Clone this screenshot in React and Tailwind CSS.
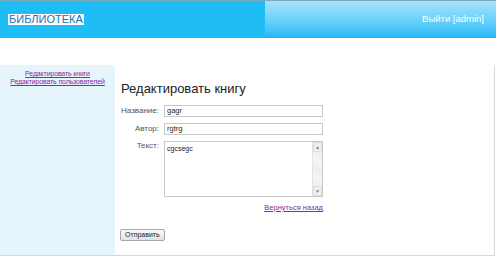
import React from 'react'

const FIELDS = [
  { label: 'Название:', value: 'gagr' },
  { label: 'Автор:', value: 'rgtrg' },
]

function ScrollBar() {
  return (
    <div className="flex w-[10px] flex-col border-l border-[#e4e4e4] bg-[#f4f4f4]">
      <div className="flex h-[10px] items-center justify-center border border-[#dcdcdc] bg-[#f0f0f0] text-[5px] leading-none text-[#888]">
        ▲
      </div>
      <div className="flex-1 bg-[repeating-linear-gradient(45deg,#ececec_0,#ececec_1px,#f8f8f8_1px,#f8f8f8_2px)]" />
      <div className="flex h-[10px] items-center justify-center border border-[#dcdcdc] bg-[#f0f0f0] text-[5px] leading-none text-[#888]">
        ▼
      </div>
    </div>
  )
}

export default function App() {
  return (
    <div className="relative h-[258px] w-[496px] overflow-hidden bg-white font-['Liberation_Sans',Arial,sans-serif]">
      <header className="flex h-[38px] border-t border-[#7da6bf]">
        <div className="w-[265px] bg-[#1ebdf6] pl-[8px] pt-[5px]">
          <span className="inline-block bg-white px-[1px] text-[11px] leading-[11px] text-[#1a6fb8]">
            БИБЛИОТЕКА
          </span>
        </div>
        <div className="flex flex-1 justify-end bg-gradient-to-b from-[#a4e2fc] via-[#6ad2fa] to-[#1bb8f5] pr-[12px] pt-[12px]">
          <span className="text-[9.5px] leading-[12px] text-white">Выйти [admin]</span>
        </div>
      </header>

      <div className="h-[27px]" />

      <div className="flex h-[191px] w-[495px] border-r border-b border-[#d3dadd]">
        <aside className="w-[115px] bg-[#e6f5fb] bg-[radial-gradient(#d6edf7_0.6px,transparent_0.6px)] bg-[length:2px_2px] pt-[5px] text-center text-[7px] leading-[8px] tracking-[-0.15px]">
          <a className="block text-[#8a2a9e] underline" href="#">Редактировать книги</a>
          <a className="block text-[#8a2a9e] underline" href="#">Редактировать пользователей</a>
        </aside>

        <main className="pl-[6px]">
          <h1 className="mt-[15px] text-[13px] leading-[17px] text-[#222]">Редактировать книгу</h1>

          <div className="mt-[8px] flex flex-col gap-[6px] text-[8px] leading-[12px] text-[#555]">
            {FIELDS.map(({ label, value }) => (
              <div key={label} className="flex items-center">
                <span className="w-[38px] text-right">{label}</span>
                <div className="ml-[5px] h-[12px] w-[159px] border border-[#c9c9c9] pl-[2px] text-[7.5px] leading-[10px] text-[#222]">
                  {value}
                </div>
              </div>
            ))}
            <div className="flex">
              <span className="w-[38px] text-right leading-[10px]">Текст:</span>
              <div className="ml-[5px] flex h-[56px] w-[159px] border border-[#c9c9c9]">
                <div className="flex-1 pl-[2px] pt-[2px] text-[7px] leading-[9px] text-[#222]">cgcsegc</div>
                <ScrollBar />
              </div>
            </div>
          </div>

          <div className="mt-[6px] w-[202px] text-right text-[7.5px] leading-[9px]">
            <a className="text-[#8a2a9e] underline" href="#">Вернуться назад</a>
          </div>

          <button className="mt-[17px] -ml-[1px] block h-[12px] rounded-[2px] border border-[#a8a8a8] bg-gradient-to-b from-[#fafafa] to-[#e2e2e2] px-[4px] text-[7px] leading-[10px] text-[#222]">
            Отправить
          </button>
        </main>
      </div>
    </div>
  )
}
